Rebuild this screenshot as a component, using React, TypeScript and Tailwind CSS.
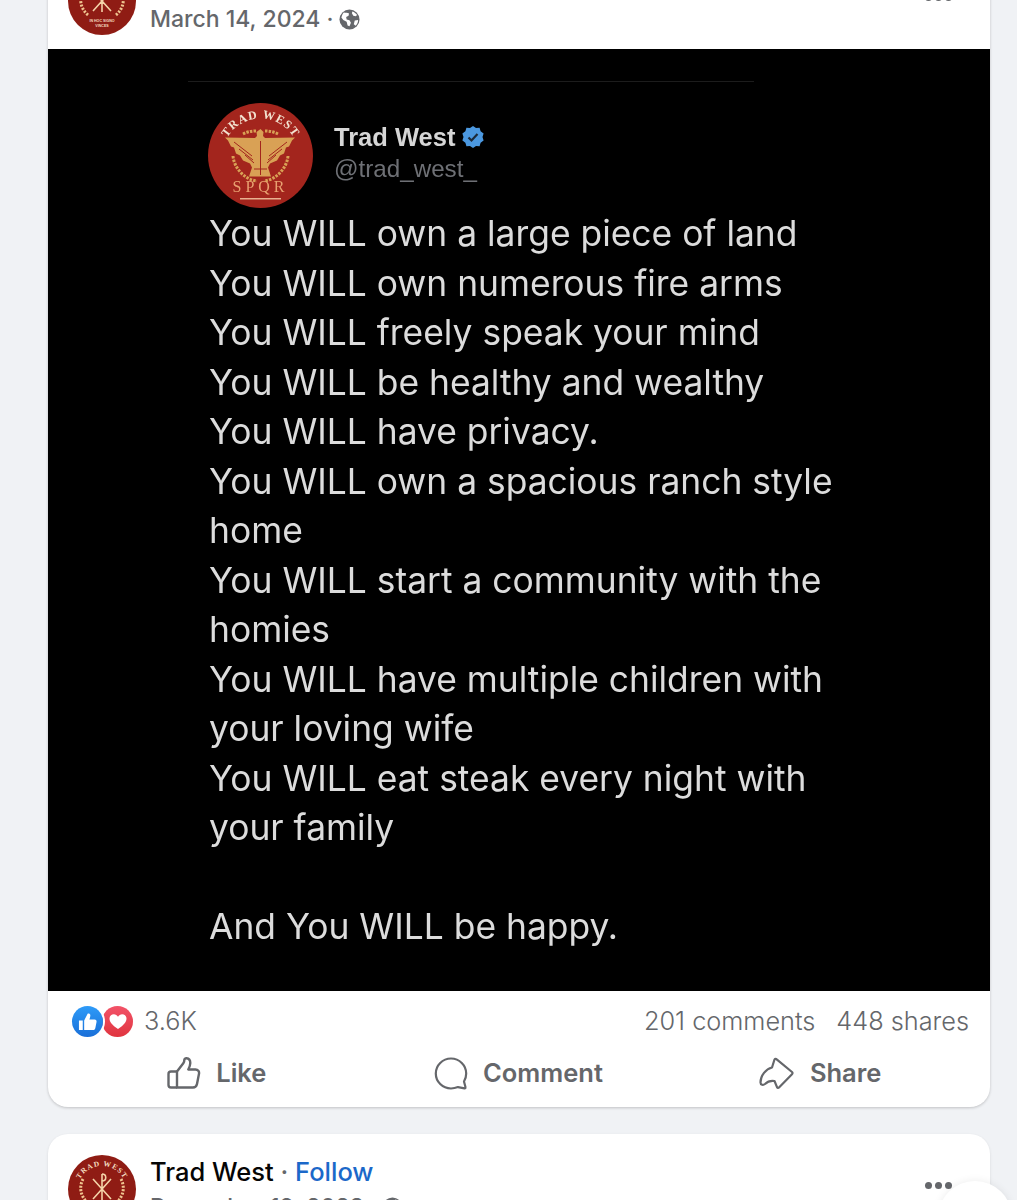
const tweetLines = [
  "You WILL own a large piece of land",
  "You WILL own numerous fire arms",
  "You WILL freely speak your mind",
  "You WILL be healthy and wealthy",
  "You WILL have privacy.",
  "You WILL own a spacious ranch style",
  "home",
  "You WILL start a community with the",
  "homies",
  "You WILL have multiple children with",
  "your loving wife",
  "You WILL eat steak every night with",
  "your family",
  "\u00a0",
  "And You WILL be happy.",
];

const Globe = () => (
  <svg width="21" height="21" viewBox="0 0 22 22">
    <circle cx="11" cy="11" r="10.5" fill="#65676b" />
    <path
      d="M5 3.600c2 .4 4 .2 5.500 1.200l-.5 2.400-2.500 1.200.5 2.600 3 .8 1.500 2.700-1.500 3.500-2-.6-1-4-3.500-2L2.500 9C3 7 3.700 5 5 3.600zM14 2.500c2 .6 4 2 5 3.800l-1.500 1.200-2.500-.5-1.500-2.500zM16.500 12l3.500-.5c0 2.500-1 4.500-2.500 6l-2-1.500z"
      fill="#fff"
    />
  </svg>
);

// small round page logo, chi-rho inside a laurel
const PageLogo = ({ id }: { id: string }) => (
  <svg width="68" height="68" viewBox="0 0 68 68" className="shrink-0">
    <circle cx="34" cy="34" r="34" fill="#8f1c14" />
    <path id={id} d="M9 36a25 25 0 0 1 50 0" fill="none" />
    <text fontSize="7.500" fontFamily="Liberation Serif" fontWeight="700" fill="#f4dcc0" letterSpacing="1">
      <textPath href={`#${id}`} startOffset="50%" textAnchor="middle">
        TRAD WEST
      </textPath>
    </text>
    <path
      d="M15 24c-4 8-3 17 5 24M53 24c4 8 3 17-5 24"
      fill="none"
      stroke="#efc48f"
      strokeWidth="3"
      strokeDasharray="2 1.500"
    />
    <path
      d="M34 19v26M25 24l18 20M43 24L25 44M34 19c5 0 5 7 0 7"
      fill="none"
      stroke="#f4d3a8"
      strokeWidth="1.600"
    />
    <text
      x="34"
      y="55"
      textAnchor="middle"
      fontSize="3.600"
      fontFamily="Liberation Sans"
      fontWeight="700"
      fill="#f4dcc0"
    >
      IN HOC SIGNO
    </text>
    <text
      x="34"
      y="60"
      textAnchor="middle"
      fontSize="3.600"
      fontFamily="Liberation Sans"
      fontWeight="700"
      fill="#f4dcc0"
    >
      VINCES
    </text>
  </svg>
);

const TweetLogo = () => (
  <svg width="105" height="105" viewBox="0 0 105 105" className="shrink-0">
    <circle cx="52.500" cy="52.500" r="52.500" fill="#a3251d" />
    <path id="tweet-arc" d="M14 54a38.500 38.500 0 0 1 77 0" fill="none" />
    <text fontSize="12" fontFamily="Liberation Serif" fontWeight="700" fill="#f3e2d0" letterSpacing="1">
      <textPath href="#tweet-arc" startOffset="50%" textAnchor="middle">
        TRAD WEST
      </textPath>
    </text>
    {/* eagle */}
    <path
      d="M52.500 26l3 3-.5 4 2 2 30-.5-3 3-3 6-3 1-2 6-4 2-3 5-7 3-2 4 3 9h-22l3-9-2-4-7-3-3-5-4-2-2-6-3-1-3-6-3-3 30 .5 2-2-.5-4z"
      fill="#d9a155"
    />
    <path
      d="M26 39l18 14M79 39L61 53M31 46l14 11M74 46L60 57M37 52l9 8M68 52l-9 8M52.500 38v34M46 66h13"
      stroke="#a3251d"
      strokeWidth="1"
      fill="none"
    />
    <path
      d="M25 53c1 12 12 24 24 25M80 53c-1 12-12 24-24 25M35 31c4-2 8-3 13-3M70 31c-4-2-8-3-13-3"
      fill="none"
      stroke="#d9a155"
      strokeWidth="3"
      strokeDasharray="2.500 1.200"
    />
    <text
      x="52.500"
      y="89"
      textAnchor="middle"
      fontSize="16"
      fontFamily="Liberation Serif"
      fill="#e8a070"
      letterSpacing="4"
    >
      SPQR
    </text>
    <rect x="32" y="95" width="41" height="1.500" fill="#e8b090" />
  </svg>
);

const Badge = () => (
  <svg width="24" height="24" viewBox="0 0 24 24">
    <path
      d="M12 1l3 2 3.600-.2 1 3.400L22.600 8.400 21.500 12l1.100 3.600-3 2.200-1 3.400-3.600-.2-3 2-3-2-3.600.2-1-3.400-3-2.200L2.500 12 1.400 8.400l3-2.200 1-3.400L9 3z"
      fill="#4b98e0"
    />
    <path d="M7.500 12.500l3 3 6-6.500" fill="none" stroke="#1c2a3a" strokeWidth="2.200" />
  </svg>
);

const LikeOutline = () => (
  <svg width="34" height="33" viewBox="0 0 34 33" fill="none" stroke="#65676b" strokeWidth="2.400" strokeLinejoin="round">
    <path d="M10 14.500H4a2.500 2.500 0 0 0-2.500 2.500v11A2.500 2.500 0 0 0 4 30.500h6" />
    <path d="M10 30.500V14.500l6.500-8.500c.6-1 .8-2 .8-3 0-1 1-1.800 2.200-1.700 2.500.3 3.800 2.300 3.800 4.700 0 2.500-1 4.500-2 6.500h7.200c2.400 0 4 2 3.500 4.300l-2 10.200c-.5 2.300-2 3.500-4 3.500z" />
  </svg>
);

const CommentOutline = () => (
  <svg width="34" height="33" viewBox="0 0 34 33" fill="none" stroke="#65676b" strokeWidth="2.200" strokeLinejoin="round">
    <path d="M17 1.500C8.500 1.500 1.800 8.300 1.800 16.500S8.500 31.500 17 31.500c2.800 0 5-.6 7-1.400l6.500 1.200c.8.200 1.200-.4 1-1L30 24.500c1.500-2.400 2.200-5 2.200-8C32.200 8.300 25.500 1.500 17 1.500z" />
  </svg>
);

const ShareOutline = () => (
  <svg width="36" height="33" viewBox="0 0 36 33" fill="none" stroke="#65676b" strokeWidth="2.200" strokeLinejoin="round">
    <path d="M15.500 2.500c.6-.9 1.500-.9 2.200-.2L33 15c.7.600.7 1.500 0 2.200L20 30.500c-.7.700-1.700.5-2-.4L15.500 24c-3.500-.5-7 .5-9.500 3-1.800 1.500-4.500 1-4.500-1.500 0-7 5.500-13.500 11.500-15z" />
  </svg>
);

const PostHeader = ({ id, date }: { id: string; date: string }) => (
  <div className="h-[103px] relative flex gap-[14px] pl-[20px] pt-[21px] overflow-hidden">
    <PageLogo id={id} />
    <div className="pt-[1px]">
      <div className="h-[32px] text-[25.500px] leading-[32px] font-medium text-[#050505] whitespace-nowrap">
        Trad West <span className="text-[#65676b]">·</span>{" "}
        <span className="text-[#1b68c9]">Follow</span>
      </div>
      <div className="flex items-center gap-[5px] mt-[4px] text-[23px] leading-[30px] font-medium text-[#65676b] whitespace-nowrap">
        <span>{date} ·</span>
        <Globe />
      </div>
    </div>
    <div className="absolute left-[877px] top-[48px] flex gap-[3px]">
      <span className="w-[7px] h-[7px] rounded-full bg-[#65676b]" />
      <span className="w-[7px] h-[7px] rounded-full bg-[#65676b]" />
      <span className="w-[7px] h-[7px] rounded-full bg-[#65676b]" />
    </div>
  </div>
);

const Action = ({ icon, label }: { icon: React.ReactNode; label: string }) => (
  <div className="flex items-center justify-center gap-[15px] text-[25.500px] font-semibold text-[#65676b]">
    {icon}
    <span>{label}</span>
  </div>
);

export default function App() {
  return (
    <div className="relative h-[1200px] overflow-hidden bg-[#f0f2f5] pl-[48px] pr-[27px] font-['Inter',sans-serif]">
      <div className="-mt-[54px] bg-white rounded-[20px] shadow-[0_1px_3px_rgba(0,0,0,0.2)] overflow-hidden">
        <PostHeader id="logo-a" date="March 14, 2024" />

        <div className="h-[942px] bg-black pl-[160px] pt-[32px] blur-[0.4px]">
          <div className="w-[566px] -ml-[20px] h-px bg-[#1c1c1c]" />
          <div className="flex items-center gap-[21px] mt-[21px] h-[105px] font-['Liberation_Sans',sans-serif]">
            <TweetLogo />
            <div className="-mt-[6px]">
              <div className="flex items-center gap-[6px] text-[25.500px] leading-[32px] font-bold text-[#d6d6d6]">
                Trad West <Badge />
              </div>
              <div className="text-[24.200px] leading-[32px] text-[#6e7075]">@trad_west_</div>
            </div>
          </div>
          <div className="mt-[1px] ml-[1px] text-[35.400px] leading-[49.500px] text-[#dcdcdc] whitespace-nowrap">
            {tweetLines.map((line, idx) => (
              <div key={idx}>{line}</div>
            ))}
          </div>
        </div>

        <div className="h-[116px]">
          <div className="flex items-center justify-between h-[60px] pl-[24px] pr-[21px] text-[25.300px] font-light text-[#65676b]">
            <div className="flex items-center">
              <span className="w-[31px] h-[31px] rounded-full bg-gradient-to-b from-[#2e9bf8] to-[#1a6fd8] flex items-center justify-center relative z-10 ring-2 ring-white">
                <svg width="19" height="19" viewBox="0 0 20 20" fill="#fff">
                  <path d="M1 9h4v10H1zM6.500 9l3.500-7c.5-1 3-.5 3 1.500 0 1.500-.5 3-1 4.500h5.500c1.500 0 2.300 1.200 2 2.500l-1.300 6.500c-.3 1.300-1.300 2-2.500 2h-9.200z" />
                </svg>
              </span>
              <span className="w-[31px] h-[31px] -ml-[1px] rounded-full bg-gradient-to-b from-[#f25268] to-[#e0343f] flex items-center justify-center">
                <svg width="20" height="19" viewBox="0 0 20 19" fill="#fff">
                  <path d="M10 17C4 13 1.500 10 1.500 6.500 1.500 4 3.500 2.200 5.800 2.200c1.800 0 3.200 1 4.200 2.600 1-1.600 2.400-2.600 4.200-2.600 2.300 0 4.300 1.800 4.300 4.300C18.500 10 16 13 10 17z" />
                </svg>
              </span>
              <span className="ml-[11px]">3.6K</span>
            </div>
            <div className="flex gap-[21px]">
              <span>201 comments</span>
              <span>448 shares</span>
            </div>
          </div>
          <div className="grid grid-cols-3 pl-[18px] pr-[19px] -mt-[3px] h-[50px]">
            <Action icon={<LikeOutline />} label="Like" />
            <Action icon={<CommentOutline />} label="Comment" />
            <Action icon={<ShareOutline />} label="Share" />
          </div>
        </div>
      </div>

      <div className="mt-[27px] bg-white rounded-[20px] shadow-[0_1px_3px_rgba(0,0,0,0.1)] overflow-hidden">
        <PostHeader id="logo-b" date="December 19, 2023" />
      </div>

      {/* floating round button cut off by the bottom edge */}
      <div className="absolute left-[938px] top-[1181px] w-[74px] h-[74px] rounded-full bg-white shadow-[0_0_8px_rgba(0,0,0,0.08)]" />
    </div>
  );
}
